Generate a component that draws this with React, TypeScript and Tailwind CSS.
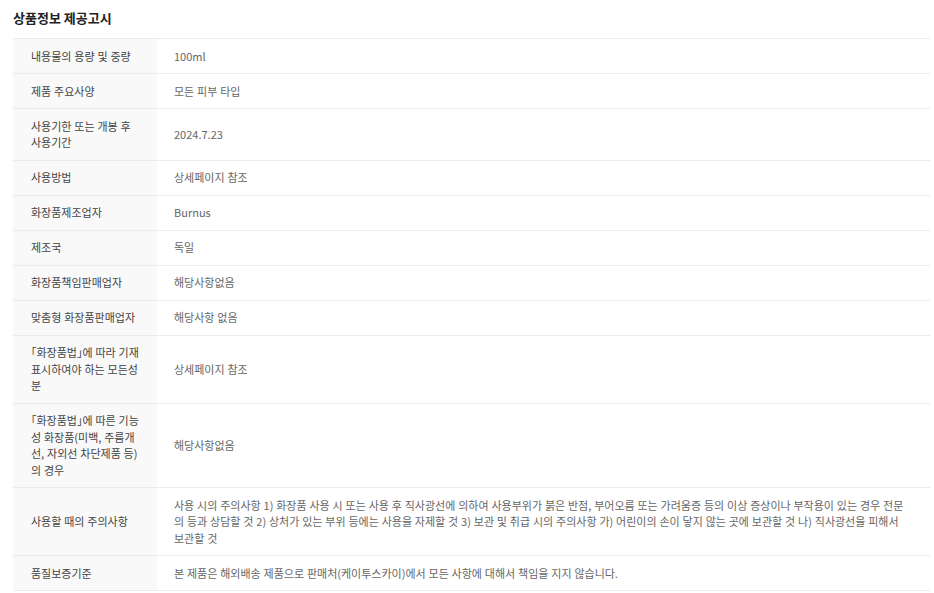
const rows: { label: string[]; value: string[] }[] = [
  { label: ["내용물의 용량 및 중량"], value: ["100ml"] },
  { label: ["제품 주요사양"], value: ["모든 피부 타입"] },
  { label: ["사용기한 또는 개봉 후", "사용기간"], value: ["2024.7.23"] },
  { label: ["사용방법"], value: ["상세페이지 참조"] },
  { label: ["화장품제조업자"], value: ["Burnus"] },
  { label: ["제조국"], value: ["독일"] },
  { label: ["화장품책임판매업자"], value: ["해당사항없음"] },
  { label: ["맞춤형 화장품판매업자"], value: ["해당사항 없음"] },
  { label: ["「화장품법」에 따라 기재", "표시하여야 하는 모든성", "분"], value: ["상세페이지 참조"] },
  {
    label: ["「화장품법」에 따른 기능", "성 화장품(미백, 주름개", "선, 자외선 차단제품 등)", "의 경우"],
    value: ["해당사항없음"],
  },
  {
    label: ["사용할 때의 주의사항"],
    value: [
      "사용 시의 주의사항 1) 화장품 사용 시 또는 사용 후 직사광선에 의하여 사용부위가 붉은 반점, 부어오름 또는 가려움증 등의 이상 증상이나 부작용이 있는 경우 전문",
      "의 등과 상담할 것 2) 상처가 있는 부위 등에는 사용을 자제할 것 3) 보관 및 취급 시의 주의사항 가) 어린이의 손이 닿지 않는 곳에 보관할 것 나) 직사광선을 피해서",
      "보관할 것",
    ],
  },
  {
    label: ["품질보증기준"],
    value: ["본 제품은 해외배송 제품으로 판매처(케이투스카이)에서 모든 사항에 대해서 책임을 지지 않습니다."],
  },
];

function Lines({ lines }: { lines: string[] }) {
  return (
    <div>
      {lines.map((l, i) => (
        <div key={i} className="whitespace-nowrap">
          {l}
        </div>
      ))}
    </div>
  );
}

export default function App() {
  return (
    <div
      className="min-h-screen bg-white pt-[8px] pl-[13px] pr-[4px] [font-feature-settings:'halt']"
      style={{ fontFamily: '"Noto Sans CJK KR", "Noto Sans", sans-serif' }}
    >
      <h2 className="text-[13px] font-bold leading-[20px] text-[#222] mb-[10px]">상품정보 제공고시</h2>

      <div className="border-t border-[#ececec]">
        {rows.map((r) => (
          <div
            key={r.label[0]}
            className="grid grid-cols-[144px_1fr] border-b border-[#ececec] text-[11px] leading-[16.5px] [word-spacing:0.4px]"
          >
            <div className="bg-[#f9f9f9] py-[8.75px] pl-[18px] pr-[12px] flex items-center text-[#444]">
              <Lines lines={r.label} />
            </div>
            <div className="py-[8.75px] pl-[17px] pr-[12px] flex items-center text-[#666]">
              <Lines lines={r.value} />
            </div>
          </div>
        ))}
      </div>
    </div>
  );
}
